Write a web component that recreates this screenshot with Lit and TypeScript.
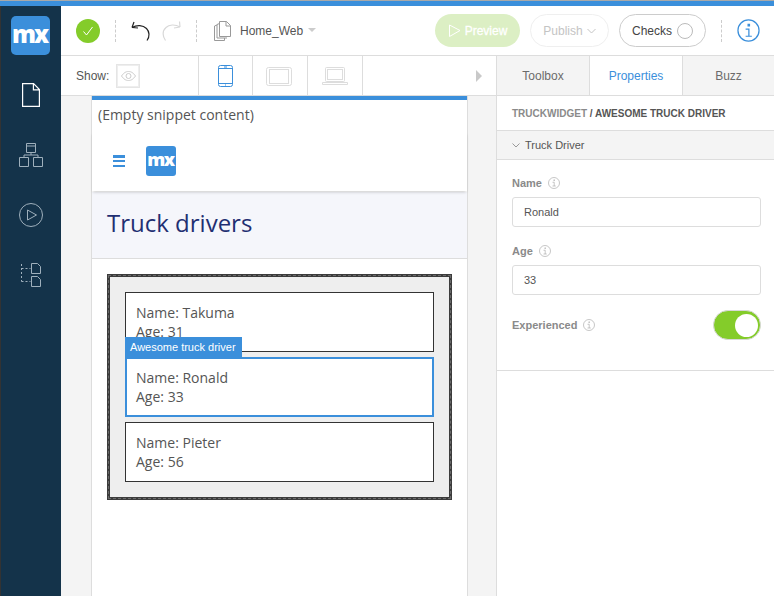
import { LitElement, html, css, svg } from "lit";
import { customElement } from "lit/decorators.js";

const infoIcon = (size: number, color: string) => html`<svg width=${size} height=${size} viewBox="0 0 24 24" fill="none" stroke=${color} stroke-width="1.3"><circle cx="12" cy="12" r="11"/><path d="M9 10.5h3.4V18M9 18h6.5M11.6 5.6h1.4v1.6h-1.4z"/></svg>`;
const info = () => html`<span class="i">${infoIcon(12, "#a8a8a8")}</span>`;

@customElement("app-root")
export class AppRoot extends LitElement {
  static styles = css`
    :host { display: block; width: 774px; height: 596px; overflow: hidden; font-family: "Liberation Sans", Arial, sans-serif; background: #fff; }
    * { box-sizing: border-box; }
    .topline { height: 6px; background: #3b8fdb; border-top: 1px solid #a9a9a9; }
    .app { display: flex; height: 590px; }
    .side { width: 61px; flex: none; background: #14334a; border-left: 1px solid #333; display: flex; flex-direction: column; align-items: center; padding: 10px 1px 0 0; }
    .logo { width: 39px; height: 39px; border-radius: 5px; background: #3b8fdb; color: #fff; font: 800 24px/36px "Open Sans", sans-serif; text-align: center; letter-spacing: -2px; padding-right: 2px; margin-bottom: 28px; }
    .side svg { display: block; margin-bottom: 36px; }
    .main { flex: 1; display: flex; flex-direction: column; min-width: 0; }
    .toolbar { height: 50px; flex: none; border-bottom: 1px solid #ddd; display: flex; align-items: center; padding: 0 14px 0 15px; font-size: 12px; color: #555; }
    .ok { width: 24px; height: 24px; border-radius: 50%; background: #84cc2a; display: flex; align-items: center; justify-content: center; margin-top: 1px; }
    .dash { width: 0; height: 22px; border-left: 1px dashed #ccc; margin-top: 1px; }
    .d1 { margin: 1px 15px 0 15px; }
    .redo { margin-left: 11px; }
    .d2 { margin: 1px 17px 0 15px; }
    .fname { margin-left: 9px; font-size: 12px; color: #555; }
    .caret { width: 0; height: 0; border: 4px solid transparent; border-top: 4px solid #ccc; border-bottom: 0; margin: -2px 0 0 5px; }
    .spacer { flex: 1; }
    .btn { height: 33px; border-radius: 17px; display: flex; align-items: center; justify-content: center; font-size: 12px; }
    .preview { width: 85px; background: #dcefc4; color: #fff; gap: 4px; font-weight: 400; -webkit-text-stroke: 0.3px #fff; }
    .publish { width: 79px; margin-left: 10px; border: 1px solid #efefef; color: #c4c4c4; gap: 4px; }
    .checks { width: 87px; margin-left: 10px; border: 1px solid #ccc; color: #444; gap: 5px; }
    .checks i { display: block; width: 16px; height: 16px; border-radius: 50%; border: 1px solid #bbb; }
    .d3 { margin: 0 15px; }
    .lower { flex: 1; display: flex; min-height: 0; }
    .left { flex: 1; min-width: 0; display: flex; flex-direction: column; }
    .showbar { height: 40px; flex: none; border-bottom: 1px solid #ddd; display: flex; align-items: stretch; font-size: 12px; color: #555; }
    .showl { width: 138px; display: flex; align-items: center; padding-left: 15px; gap: 7px; border-right: 1px solid #ddd; }
    .eye { width: 24px; height: 24px; border: 1px solid #e5e5e5; box-shadow: inset 0 0 0 1px #eee; display: flex; align-items: center; justify-content: center; }
    .dev { width: 55px; border-right: 1px solid #ddd; display: flex; align-items: center; justify-content: center; }
    .dev.first { width: 54px; }
    .arrowcell { flex: 1; display: flex; align-items: center; justify-content: flex-end; padding-right: 14px; }
    .arrow { width: 0; height: 0; border: 6px solid transparent; border-left: 6px solid #c9c9c9; border-right: 0; }
    .canvas { flex: 1; background: #f4f4f4; padding-left: 31px; padding-right: 29px; min-height: 0; overflow: hidden; }
    .page { height: 100%; background: #fff; border-top: 4px solid #3b8fdb; box-shadow: -1px 0 0 #ddd, 1px 0 0 #ddd; font-family: "Open Sans", sans-serif; font-size: 14px; color: #555; }
    .snip { height: 32px; padding: 2px 0 0 6px; line-height: 26px; }
    .nav { height: 59px; display: flex; align-items: flex-start; padding: 14px 0 0 21px; box-shadow: 0 2px 3px -1px rgba(0,0,0,.22); position: relative; }
    .burger { width: 12px; height: 12px; margin-top: 9px; display: flex; flex-direction: column; justify-content: space-between; }
    .burger b { display: block; height: 2.5px; background: #3b8fdb; }
    .navlogo { width: 30px; height: 30px; margin-left: 21px; border-radius: 3px; background: #3b8fdb; color: #fff; font: 800 18px/27px "Open Sans", sans-serif; text-align: center; letter-spacing: -1.5px; padding-right: 1px; }
    .band { height: 67px; margin-top: 1px; background: #f5f6fb; border-bottom: 1px solid #ddd; padding-left: 15px; font-size: 24px; line-height: 62px; color: #1f2f72; }
    .outerwrap { padding: 15px 15px 0 15px; }
    .outer { width: 345px; height: 226px; border: 3px solid #3c3c3c; background: #eee; padding: 15px 15px; display: flex; flex-direction: column; gap: 5px; outline: 1px dashed #6a6a6a; outline-offset: -2px; }
    .item { position: relative; height: 60px; background: #fff; border: 1px solid #333; padding: 10px; line-height: 19px; color: #555; }
    .item.sel { border: 2px solid #3b8fdb; padding: 9px 9px; }
    .tag { position: absolute; left: -2px; top: -22px; width: 117px; height: 20px; background: #3b8fdb; color: #fff; font: 11px/20px "Liberation Sans", sans-serif; padding-left: 5px; white-space: nowrap; }
    .right { width: 278px; flex: none; border-left: 1px solid #ddd; display: flex; flex-direction: column; font-size: 11px; color: #555; }
    .tabs { height: 40px; flex: none; display: flex; }
    .tab { width: 93px; background: #f4f4f4; border-right: 1px solid #ddd; border-bottom: 1px solid #ddd; display: flex; align-items: center; justify-content: center; font-size: 12px; color: #6b6b6b; padding-top: 1px; }
    .tab.on { background: #fff; color: #3b8fdb; }
    .tab:last-child { border-right: 0; flex: 1; width: auto; }
    .crumb { height: 34px; padding-left: 15px; font-weight: 700; font-size: 10px; line-height: 35px; color: #555; white-space: nowrap; }
    .crumb span { color: #8a8a8a; }
    .sec { height: 30px; background: #f4f4f4; border-top: 1px solid #ddd; border-bottom: 1px solid #ddd; display: flex; align-items: center; padding-left: 15px; gap: 5px; font-size: 11px; color: #555; }
    .props { height: 211px; border-bottom: 1px solid #ddd; padding: 0 13px 0 15px; }
    .lab { display: flex; align-items: center; gap: 6px; height: 14px; font-weight: 700; font-size: 11px; color: #8a8a8a; }
    .i { display: flex; }
    .n1 { margin-top: 16px; }
    .n2 { margin-top: 17px; }
    .input { height: 30px; margin-top: 7px; border: 1px solid #ddd; border-radius: 3px; font-size: 11px; line-height: 29px; padding-left: 11px; color: #555; }
    .exp { display: flex; align-items: center; justify-content: space-between; margin-top: 15px; height: 30px; }
    .toggle { width: 48px; height: 30px; border-radius: 15px; background: #84cc2a; border: 1px solid #d8d8d8; padding: 3px 2px 3px 0; display: flex; justify-content: flex-end; }
    .toggle i { display: block; width: 23px; height: 23px; border-radius: 50%; background: #fff; }
  `;

  private device(paths: unknown, color: string) {
    return html`<svg width="28" height="24" viewBox="0 0 28 24" fill="none" stroke=${color} stroke-width="1">${paths}</svg>`;
  }

  render() {
    const items = [["Takuma", "31"], ["Ronald", "33"], ["Pieter", "56"]];
    return html`
      <div class="topline"></div>
      <div class="app">
        <nav class="side">
          <div class="logo">mx</div>
          <svg width="18" height="24" viewBox="0 0 18 24" fill="none" stroke="#fff" stroke-width="1.2"><path d="M.6.6h11l5.800 6v16.800H.6zM11.400.6v6.200h6"/></svg>
          <svg width="24" height="24" viewBox="0 0 24 24" fill="none" stroke="#9fb0bc" stroke-width="1"><path d="M7.500.5h9v9h-9zM.5 14.500h9v9h-9zM14.500 14.500h9v9h-9zM12 9.500v2.500M5 14.500V12h14v2.500M7.500 3h9"/></svg>
          <svg width="24" height="24" viewBox="0 0 24 24" fill="none" stroke="#9fb0bc" stroke-width="1"><circle cx="12" cy="12" r="11.500"/><path d="M8.500 7l9 5-9 5z"/></svg>
          <svg width="20" height="24" viewBox="0 0 20 24" fill="none" stroke="#9fb0bc" stroke-width="1"><path d="M.5 1v17.500M.5 5.500h9M.5 18.500h9" stroke-dasharray="2 2"/><path d="M10.500.5h6l3 3v7h-9zM10.500 13.500h6l3 3v7h-9z"/></svg>
        </nav>
        <div class="main">
          <header class="toolbar">
            <div class="ok"><svg width="12" height="12" viewBox="0 0 12 12" fill="none" stroke="#fff" stroke-width="1"><path d="M1.500 6.500l3 3.500 6-8"/></svg></div>
            <div class="dash d1"></div>
            <svg width="20" height="20" viewBox="0 0 20 20" fill="none" stroke="#222" stroke-width="1.200"><path d="M1 6.500c5-3 11-2.500 14.500 1 3 3 3.500 8 .5 12M1 6.500L3 1M1 6.500l6 .5"/></svg>
            <svg class="redo" width="19" height="20" viewBox="0 0 19 20" fill="none" stroke="#d8d8d8" stroke-width="1.200"><path d="M18 6c-5-3-11-2.500-14 .5-4 3.500-3.500 9-.5 13M18 6l-.5-5.500M18 6l-6 1"/></svg>
            <div class="dash d2"></div>
            <svg width="17" height="20" viewBox="0 0 17 20" fill="none" stroke="#999" stroke-width="1"><path d="M5.500.5h7l4 4v11h-11zM12 .5v4.500h4.500M5.500 2.500l-2.500 1v13.500h10M3 4l-2.500 1v14.500h10v-2.500"/></svg>
            <span class="fname">Home_Web</span>
            <span class="caret"></span>
            <span class="spacer"></span>
            <div class="btn preview"><svg width="13" height="13" viewBox="0 0 13 13" fill="none" stroke="#fff" stroke-width="1"><path d="M1.500 1l10.500 5.500-10.500 6z"/></svg>Preview</div>
            <div class="btn publish">Publish<svg width="9" height="6" viewBox="0 0 9 6" fill="none" stroke="#c4c4c4"><path d="M.5 1l4 4 4-4"/></svg></div>
            <div class="btn checks">Checks<i></i></div>
            <div class="dash d3"></div>
            ${infoIcon(23, "#3b8fdb")}
          </header>
          <div class="lower">
            <div class="left">
              <div class="showbar">
                <div class="showl">Show:
                  <div class="eye"><svg width="15" height="10" viewBox="0 0 15 10" fill="none" stroke="#ccc"><path d="M.5 5C3 1.500 5 .5 7.500.5S12 1.500 14.500 5C12 8.500 10 9.500 7.500 9.500S3 8.500 .5 5z"/><circle cx="7.500" cy="5" r="2.500"/></svg></div>
                </div>
                <div class="dev first">${this.device(svg`<rect x="6.500" y="1.500" width="14" height="21" rx="2"/><path d="M6.500 4.500h14M6.500 19.500h14M12 3h3M13 21h1"/>`, "#3b8fdb")}</div>
                <div class="dev">${this.device(svg`<rect x=".5" y="3.500" width="25" height="18" rx="2"/><rect x="3.500" y="5.500" width="19" height="14"/>`, "#ddd")}</div>
                <div class="dev">${this.device(svg`<rect x="4.500" y="3.500" width="19" height="14" rx="1"/><rect x="6.500" y="5.500" width="15" height="10"/><path d="M1.500 18.500h25v2h-25z"/>`, "#ddd")}</div>
                <div class="arrowcell"><div class="arrow"></div></div>
              </div>
              <div class="canvas">
                <div class="page">
                  <div class="snip">(Empty snippet content)</div>
                  <div class="nav">
                    <div class="burger"><b></b><b></b><b></b></div>
                    <div class="navlogo">mx</div>
                  </div>
                  <div class="band">Truck drivers</div>
                  <div class="outerwrap">
                    <div class="outer">
                      ${items.map(([n, a], idx) => html`
                        <div class="item ${idx === 1 ? "sel" : ""}">
                          ${idx === 1 ? html`<div class="tag">Awesome truck driver</div>` : ""}
                          <div>Name: ${n}</div><div>Age: ${a}</div>
                        </div>`)}
                    </div>
                  </div>
                </div>
              </div>
            </div>
            <aside class="right">
              <div class="tabs">
                <div class="tab">Toolbox</div>
                <div class="tab on">Properties</div>
                <div class="tab">Buzz</div>
              </div>
              <div class="crumb"><span>TRUCKWIDGET</span> / AWESOME TRUCK DRIVER</div>
              <div class="sec"><svg width="8" height="5" viewBox="0 0 8 5" fill="none" stroke="#999"><path d="M.5.500L4 4 7.500.5"/></svg>Truck Driver</div>
              <div class="props">
                <div class="lab n1">Name ${info()}</div>
                <div class="input">Ronald</div>
                <div class="lab n2">Age ${info()}</div>
                <div class="input">33</div>
                <div class="exp">
                  <div class="lab">Experienced ${info()}</div>
                  <div class="toggle"><i></i></div>
                </div>
              </div>
            </aside>
          </div>
        </div>
      </div>
    `;
  }
}
